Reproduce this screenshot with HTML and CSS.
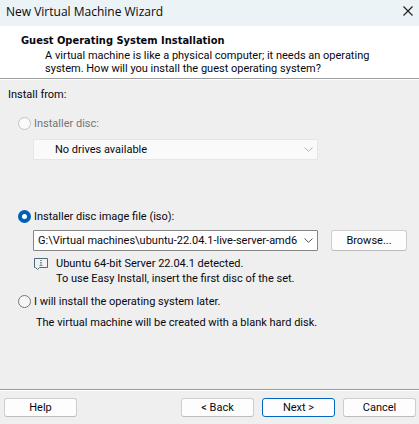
FILE: index.html
```html
<!DOCTYPE html>
<html lang="en">
<head>
<meta charset="utf-8">
<title>New Virtual Machine Wizard</title>
<link rel="stylesheet" href="styles.css">
</head>
<body>
<form class="wizard">
  <header class="titlebar">
    <span class="caption">New Virtual Machine Wizard</span>
    <button class="close" type="button" aria-label="Close">
      <svg width="10" height="10" viewBox="0 0 10 10"><path d="M0.5 0.5 9.5 9.5M9.5 0.5 0.5 9.5" fill="none" stroke="#1c1c1c" stroke-width="1.1"/></svg>
    </button>
  </header>
  <section class="banner">
    <h1>Guest Operating System Installation</h1>
    <p>A virtual machine is like a physical computer; it needs an operating system. How will you install the guest operating system?</p>
  </section>
  <main class="content">
    <p class="lead">Install from:</p>
    <div class="options">
      <div class="choice">
        <input type="radio" name="source" id="disc" disabled>
        <label for="disc">Installer disc:</label>
      </div>
      <div class="field drive">
        <select aria-label="Installer disc drive" disabled><option>No drives available</option></select>
        <svg width="9" height="5" viewBox="0 0 9 5"><path d="M0.5 0.5 4.5 4.3 8.5 0.5" fill="none" stroke="#b4b4b4"/></svg>
      </div>
      <div class="choice">
        <input type="radio" name="source" id="iso" checked>
        <label for="iso">Installer disc image file (iso):</label>
      </div>
      <div class="row">
        <div class="field path">
          <input type="text" aria-label="Image file path" value="G:\Virtual machines\ubuntu-22.04.1-live-server-amd64.iso">
          <button class="drop" type="button" aria-label="Recent files"><svg width="9" height="5" viewBox="0 0 9 5"><path d="M0.5 0.5 4.5 4.3 8.5 0.5" fill="none" stroke="#555"/></svg></button>
        </div>
        <button class="btn browse" type="button">Browse...</button>
      </div>
      <div class="note">
        <svg width="14" height="12" viewBox="0 0 14 12"><path d="M0.5 0.5H13.5V9.5H5.5L3.5 11.5 1.5 9.5H0.5Z" fill="#f1f2f3" stroke="#4d6878"/><path d="M6 2.5H8M6 4.5H7.5M7 4V8M5.5 7.5H8.5" fill="none" stroke="#7d8d97"/></svg>
        <p>Ubuntu 64-bit Server 22.04.1 detected.<br>To use Easy Install, insert the first disc of the set.</p>
      </div>
      <div class="choice">
        <input type="radio" name="source" id="later">
        <label for="later">I will install the operating system later.</label>
      </div>
      <p class="hint">The virtual machine will be created with a blank hard disk.</p>
    </div>
  </main>
  <footer class="actions">
    <button class="btn help" type="button">Help</button>
    <button class="btn" type="button">&lt; Back</button>
    <button class="btn primary" type="submit">Next &gt;</button>
    <button class="btn" type="button">Cancel</button>
  </footer>
</form>
</body>
</html>
```
FILE: styles.css
```css
* { box-sizing: border-box; }

body {
  margin: 0;
  background: #efefef;
  color: #08080f;
  font: 11px/13px Roboto, sans-serif;
}

h1, p { margin: 0; }
button, input, select { font: inherit; color: inherit; margin: 0; }
svg { display: block; }

.wizard {
  display: flex;
  flex-direction: column;
  min-height: 100vh;
}

.titlebar {
  display: flex;
  align-items: center;
  justify-content: space-between;
  height: 26px;
  padding: 0 6px 4px;
  background: #ecf3f7;
}
.caption { font-family: "Open Sans", sans-serif; font-size: 12px; }
.close { padding: 0; border: 0; background: none; }

.banner {
  padding: 7px 40px 3px 21px;
  background: #fff;
  border-bottom: 1px solid #9d9d9d;
}
.banner h1 {
  font-family: "DejaVu Sans Condensed", sans-serif;
  font-size: 11px;
  line-height: 16px;
}
.banner p { padding-left: 24px; }

.content {
  flex: 1;
  padding: 8px 12px 0 8px;
  border-top: 1px solid #fff;
}
.lead { line-height: 14px; }

.options { padding: 13px 0 0 10px; }

.choice {
  display: flex;
  align-items: center;
  gap: 3px;
  height: 16px;
}
.choice input {
  appearance: none;
  width: 13px;
  height: 13px;
  border: 1px solid #767676;
  border-radius: 50%;
  background: #f6f6f6;
}
.choice input:checked {
  border: 4px solid #005fb8;
  background: #fff;
}
.choice input:disabled { border-color: #c4c4c4; background: #fafafa; }
.choice input:disabled + label { color: #757575; }

.field { display: flex; align-items: center; height: 21px; }

.drive {
  margin: 8px 89px 48px 15px;
  padding-right: 4px;
  border: 1px solid #e6e6e6;
  background: #fafafa;
}
.drive select {
  flex: 1;
  appearance: none;
  padding: 0 0 0 21px;
  border: 0;
  background: none;
  opacity: 1;
  color: #08080f;
}

.row { display: flex; gap: 13px; padding-left: 15px; margin-top: 6px; }

.path {
  flex: 1;
  border: 1px solid #858585;
  border-radius: 1px;
  background: #fff;
}
.path input {
  flex: 1;
  min-width: 0;
  height: 19px;
  padding: 0;
  margin-left: 4px;
  border: 0;
  outline: 0;
  background: none;
}
.drop { padding: 0 4px 0 7px; border: 0; background: none; }

.btn {
  width: 73px;
  height: 19px;
  padding: 0;
  border: 1px solid #cecece;
  border-bottom-color: #bdbdbd;
  border-radius: 3px;
  background: #fdfdfd;
}
.browse { width: 76px; height: 21px; }
.btn.primary { border-color: #0067c0; }

.note {
  display: flex;
  align-items: flex-start;
  gap: 8px;
  padding: 5px 0 0 16px;
  line-height: 15px;
}
.note svg { margin-top: 2px; }
.note + .choice { margin-top: 7px; }

.hint { margin-top: 6px; padding-left: 18px; line-height: 15px; }

.actions {
  display: flex;
  gap: 8px;
  padding: 8px 3px 7px 4px;
  border-top: 1px solid #9d9d9d;
  box-shadow: inset 0 1px #fff;
}
.help { margin-right: auto; }
```
